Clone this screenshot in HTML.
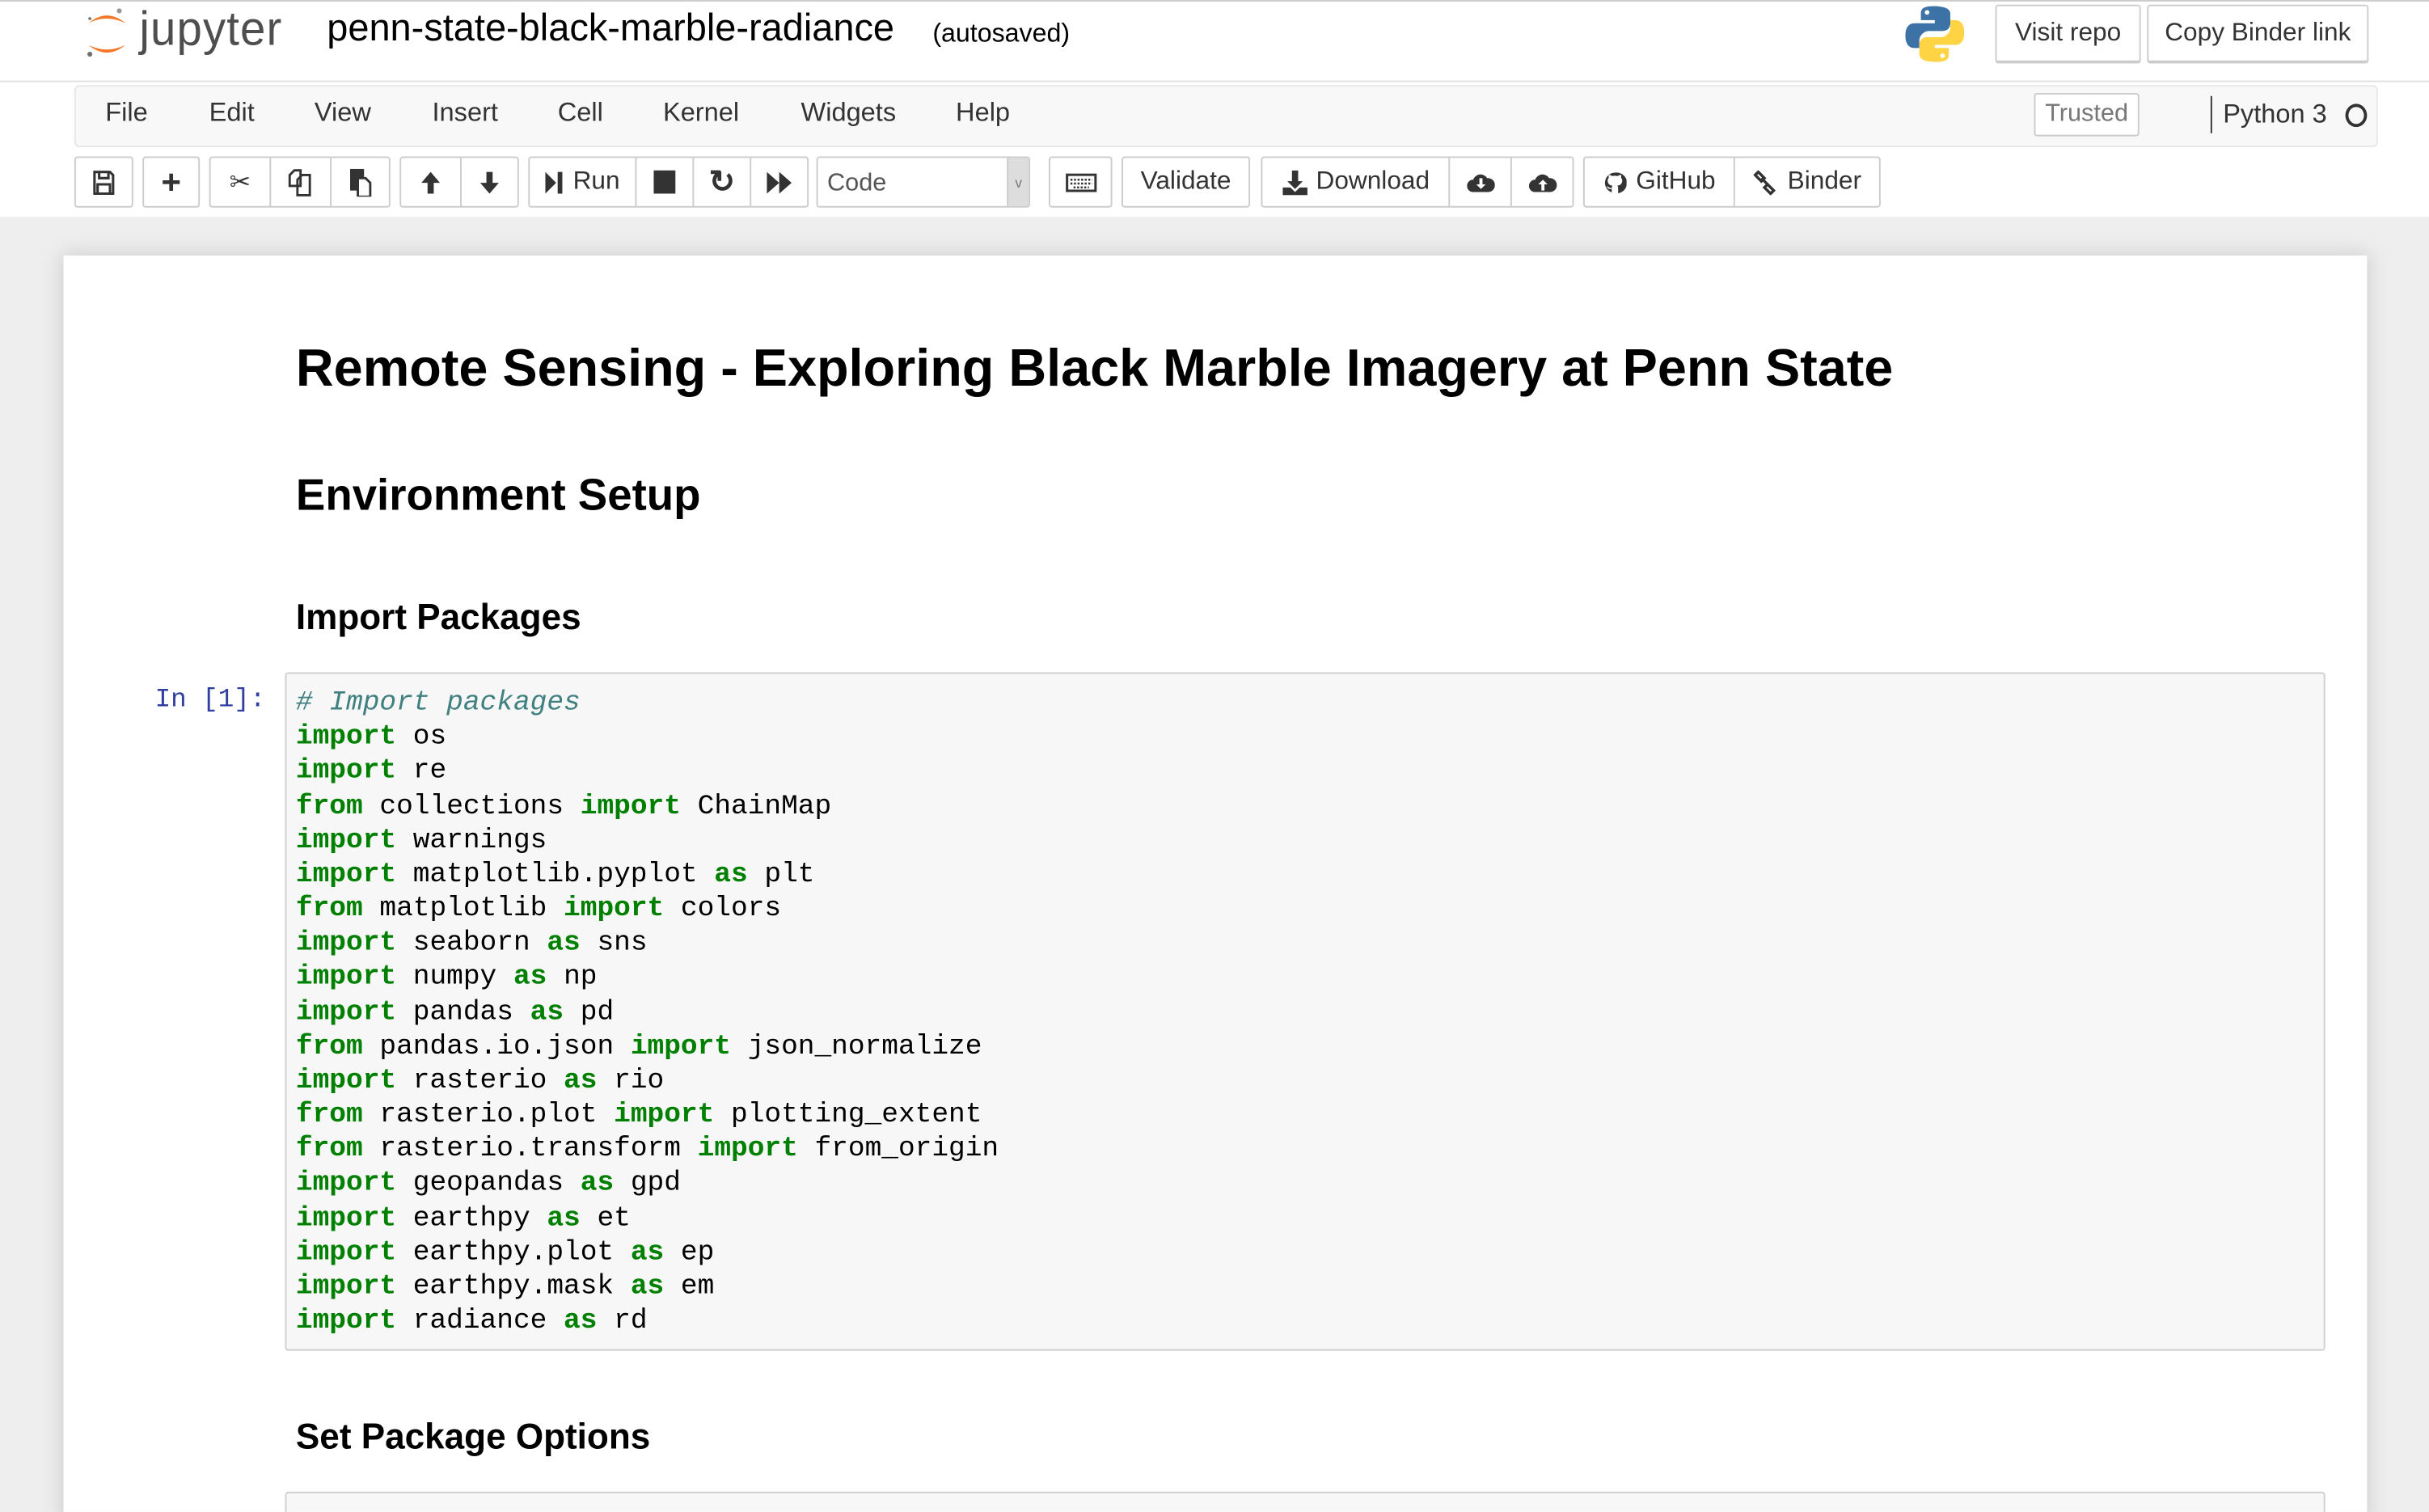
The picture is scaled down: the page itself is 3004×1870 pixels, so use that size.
<!DOCTYPE html>
<html><head><meta charset="utf-8">
<style>
html,body{margin:0;padding:0;width:3004px;height:1870px;overflow:hidden;background:#eee;}
#w{position:absolute;left:0;top:0;width:1568px;height:976px;overflow:hidden;transform:scale(1.91582);transform-origin:0 0;background:#eeeeee;font-family:"Liberation Sans",sans-serif;color:#000;}
.a{position:absolute;}
.btn{position:absolute;border:1px solid #ccc;border-radius:2px;background:#fff;box-sizing:border-box;display:flex;font-size:16.5px;color:#333;}
.btn>div{display:flex;align-items:center;justify-content:center;height:100%;border-left:1px solid #ccc;box-sizing:border-box;}
.btn>div:first-child{border-left:none;}
.menu span{position:absolute;top:63px;font-size:17px;color:#333;}
pre{margin:0;font-family:"Liberation Mono",monospace;font-size:18px;line-height:22.17px;color:#000;}
.k{color:#008000;font-weight:bold;}
.c{color:#408080;font-style:italic;}
h1,h2,h3{margin:0;position:absolute;font-weight:bold;left:191px;}
</style></head><body><div id="w">
<!-- header -->
<div class="a" style="left:0;top:0;width:1568px;height:53px;background:#fff;border-top:1px solid #ccc;border-bottom:1px solid #e0e0e0;box-sizing:border-box;"></div>
<svg class="a" style="left:53px;top:4px" width="32" height="36" viewBox="0 0 32 36">
<path d="M4 11 Q16 1 28 11 Q16 5 4 11Z" fill="#F37726"/>
<path d="M4 25 Q16 35 28 25 Q16 31 4 25Z" fill="#F37726"/>
<circle cx="24" cy="3" r="1.6" fill="#989898"/><circle cx="5" cy="31" r="1.6" fill="#6f7070"/><circle cx="5" cy="8" r="1" fill="#767677"/>
</svg>
<div class="a" style="left:90px;top:1px;font-size:31px;color:#4e4e4e;letter-spacing:0.6px;transform:scaleX(0.95);transform-origin:0 0;">jupyter</div>
<div class="a" style="left:211px;top:5px;font-size:24.5px;">penn-state-black-marble-radiance</div>
<div class="a" style="left:602px;top:12px;font-size:16.8px;">(autosaved)</div>
<svg class="a" style="left:1230px;top:3px" width="38" height="38" viewBox="0 0 38 38">
<path d="M18 1c-8 0-8 3-8 5v4h9v2H6c-4 0-6 3-6 8s2 8 6 8h3v-5c0-3 3-6 6-6h9c3 0 5-2 5-5V6c0-3-3-5-11-5z" fill="#3d72a6"/>
<circle cx="14" cy="5" r="1.5" fill="#fff"/>
<path d="M20 37c8 0 8-3 8-5v-4h-9v-2h13c4 0 6-3 6-8s-2-8-6-8h-3v5c0 3-3 6-6 6h-9c-3 0-5 2-5 5v6c0 3 3 5 11 5z" fill="#ffd444"/>
<circle cx="24" cy="33" r="1.5" fill="#fff"/>
</svg>
<div class="btn" style="left:1288px;top:3px;width:94px;height:38px;border-bottom:2px solid #ccc;"><div style="width:100%">Visit repo</div></div>
<div class="btn" style="left:1386px;top:3px;width:143px;height:38px;border-bottom:2px solid #ccc;"><div style="width:100%">Copy Binder link</div></div>
<!-- menubar area -->
<div class="a" style="left:0;top:53px;width:1568px;height:87px;background:#fff;"></div>
<div class="a" style="left:48px;top:55px;width:1487px;height:40px;background:#f8f8f8;border:1px solid #e7e7e7;border-radius:3px;box-sizing:border-box;"></div>
<div class="menu"><span style="left:68px">File</span><span style="left:135px">Edit</span><span style="left:203px">View</span><span style="left:279px">Insert</span><span style="left:360px">Cell</span><span style="left:428px">Kernel</span><span style="left:517px">Widgets</span><span style="left:617px">Help</span></div>
<div class="btn" style="left:1313px;top:60px;width:68px;height:28px;color:#777;font-size:16px;"><div style="width:100%">Trusted</div></div>
<div class="a" style="left:1427px;top:62px;width:1px;height:24px;background:#333;"></div>
<div class="a" style="left:1435px;top:64px;font-size:17px;color:#333;">Python 3</div>
<div class="a" style="left:1514px;top:67px;width:10px;height:11px;border:2px solid #333;border-radius:50%;"></div>
<!-- toolbar -->
<div class="btn" style="left:48px;top:101px;width:38px;height:33px"><div style="width:100%"><svg width="14" height="16" viewBox="0 0 14 16"><path d="M1 1h10l2 2v12H1z M4 1v4h6V1 M3 9h8v6H3z" fill="none" stroke="#333" stroke-width="1.6"/></svg></div></div>
<div class="btn" style="left:92px;top:101px;width:37px;height:33px"><div style="width:100%;font-weight:bold;font-size:22px;">+</div></div>
<div class="btn" style="left:135px;top:101px;width:117px;height:33px"><div style="width:38px">✂</div><div style="width:39px"><svg width="16" height="18" viewBox="0 0 16 18"><path d="M1 4l3-3h4v10H1z M6 7l3-3h5v13H6z" fill="#fff" stroke="#333" stroke-width="1.5"/></svg></div><div style="width:38px"><svg width="14" height="18" viewBox="0 0 14 18"><rect x="0" y="0" width="9" height="14" fill="#333"/><path d="M5 6h5l3 3v9H5z" fill="#fff" stroke="#333" stroke-width="1.5"/></svg></div></div>
<div class="btn" style="left:258px;top:101px;width:77px;height:33px"><div style="width:38px"><svg width="14" height="16" viewBox="0 0 14 16"><path d="M7 1L1 8h4v7h4V8h4z" fill="#333"/></svg></div><div style="width:38px"><svg width="14" height="16" viewBox="0 0 14 16"><path d="M7 15L1 8h4V1h4v7h4z" fill="#333"/></svg></div></div>
<div class="btn" style="left:341px;top:101px;width:181px;height:33px"><div style="width:68px"><svg width="12" height="16" viewBox="0 0 12 16" style="margin-right:6px"><path d="M0 1l7 7-7 7z M8 1h3v14H8z" fill="#333"/></svg>Run</div><div style="width:37px"><div style="width:14px;height:15px;background:#333"></div></div><div style="width:37px;font-size:20px;font-weight:bold;">↻</div><div style="width:37px"><svg width="16" height="14" viewBox="0 0 16 14"><path d="M0 0l8 7-8 7z M8 0l8 7-8 7z" fill="#333"/></svg></div></div>
<div class="btn" style="left:527px;top:101px;width:138px;height:33px;border-color:#ccc;"><div style="width:122px;justify-content:flex-start;padding-left:6px;padding-top:3px;font-size:16px;color:#555;">Code</div><div style="width:14px;background:#ddd;font-size:9px;color:#777;">v</div></div>
<div class="btn" style="left:677px;top:101px;width:41px;height:33px"><div style="width:100%"><svg width="20" height="12" viewBox="0 0 20 12"><rect x="0.8" y="0.8" width="18.4" height="10.4" fill="none" stroke="#333" stroke-width="1.6"/><path d="M3 4h14M3 6.5h14M5 9h10" stroke="#333" stroke-width="1.3" stroke-dasharray="1.3 1"/></svg></div></div>
<div class="btn" style="left:724px;top:101px;width:83px;height:33px"><div style="width:100%">Validate</div></div>
<div class="btn" style="left:814px;top:101px;width:202px;height:33px"><div style="width:121px"><svg width="16" height="16" viewBox="0 0 16 16" style="margin-right:6px"><path d="M6 0h4v7h3l-5 5-5-5h3z M0 11h5l3 3 3-3h5v5H0z" fill="#333"/></svg>Download</div><div style="width:40px"><svg width="18" height="15" viewBox="0 0 18 15"><path d="M4 14a4 4 0 010-8 5 5 0 019-1 4.5 4.5 0 011 9z" fill="#333"/><path d="M8 5h2v4h2l-3 3-3-3h2z" fill="#fff"/></svg></div><div style="width:40px"><svg width="18" height="15" viewBox="0 0 18 15"><path d="M4 14a4 4 0 010-8 5 5 0 019-1 4.5 4.5 0 011 9z" fill="#333"/><path d="M8 13h2V9h2L9 6 6 9h2z" fill="#fff"/></svg></div></div>
<div class="btn" style="left:1022px;top:101px;width:192px;height:33px"><div style="width:97px"><svg width="15" height="16" viewBox="0 0 16 16" style="margin-right:6px"><path d="M8 1a7 7 0 00-2.2 13.6v-2.4C3 12.8 3 11 2 10.5c1.3-.3 2 1.3 3.8 1.2 0-.9.3-1.5.6-1.7C4 9.7 3 8.5 3 6.5 3 5.7 3.3 5 3.8 4.5c-.2-.6-.2-1.4.1-2 1 0 1.8.6 2.2.9a7 7 0 013.8 0c.4-.3 1.2-.9 2.2-.9.3.6.3 1.4.1 2 .5.5.8 1.2.8 2 0 2-1 3.2-3.4 3.5.3.3.6.8.6 1.7v3.5A7 7 0 008 1z" fill="#333"/></svg>GitHub</div><div style="width:94px"><svg width="16" height="16" viewBox="0 0 16 16" style="margin-right:6px"><path d="M3 1l4 4-2 2-4-4z M9 9l4 4-2 2-4-4z M5 5l6 6" fill="none" stroke="#333" stroke-width="1.8"/></svg>Binder</div></div>
<!-- notebook -->
<div class="a" style="left:41px;top:165px;width:1487px;height:830px;background:#fff;box-shadow:0 0 12px 1px rgba(87,87,87,0.2);"></div>
<h1 style="top:219px;font-size:33.8px;">Remote Sensing - Exploring Black Marble Imagery at Penn State</h1>
<h2 style="top:304px;font-size:28.5px;">Environment Setup</h2>
<h3 style="top:385px;font-size:23px;">Import Packages</h3>
<div class="a" style="left:100px;top:442px;font-family:'Liberation Mono',monospace;font-size:17px;line-height:22px;color:#303F9F;">In [1]:</div>
<div class="a" style="left:184px;top:434px;width:1317px;height:438px;background:#f7f7f7;border:1px solid #cfcfcf;border-radius:2px;box-sizing:border-box;"></div>
<pre class="a" style="left:191px;top:443px;"><span class="c"># Import packages</span>
<span class="k">import</span> os
<span class="k">import</span> re
<span class="k">from</span> collections <span class="k">import</span> ChainMap
<span class="k">import</span> warnings
<span class="k">import</span> matplotlib.pyplot <span class="k">as</span> plt
<span class="k">from</span> matplotlib <span class="k">import</span> colors
<span class="k">import</span> seaborn <span class="k">as</span> sns
<span class="k">import</span> numpy <span class="k">as</span> np
<span class="k">import</span> pandas <span class="k">as</span> pd
<span class="k">from</span> pandas.io.json <span class="k">import</span> json_normalize
<span class="k">import</span> rasterio <span class="k">as</span> rio
<span class="k">from</span> rasterio.plot <span class="k">import</span> plotting_extent
<span class="k">from</span> rasterio.transform <span class="k">import</span> from_origin
<span class="k">import</span> geopandas <span class="k">as</span> gpd
<span class="k">import</span> earthpy <span class="k">as</span> et
<span class="k">import</span> earthpy.plot <span class="k">as</span> ep
<span class="k">import</span> earthpy.mask <span class="k">as</span> em
<span class="k">import</span> radiance <span class="k">as</span> rd</pre>
<h3 style="top:914px;font-size:23px;">Set Package Options</h3>
<div class="a" style="left:184px;top:963px;width:1317px;height:40px;background:#f7f7f7;border:1px solid #cfcfcf;border-radius:2px;box-sizing:border-box;"></div>
</div></body></html>
